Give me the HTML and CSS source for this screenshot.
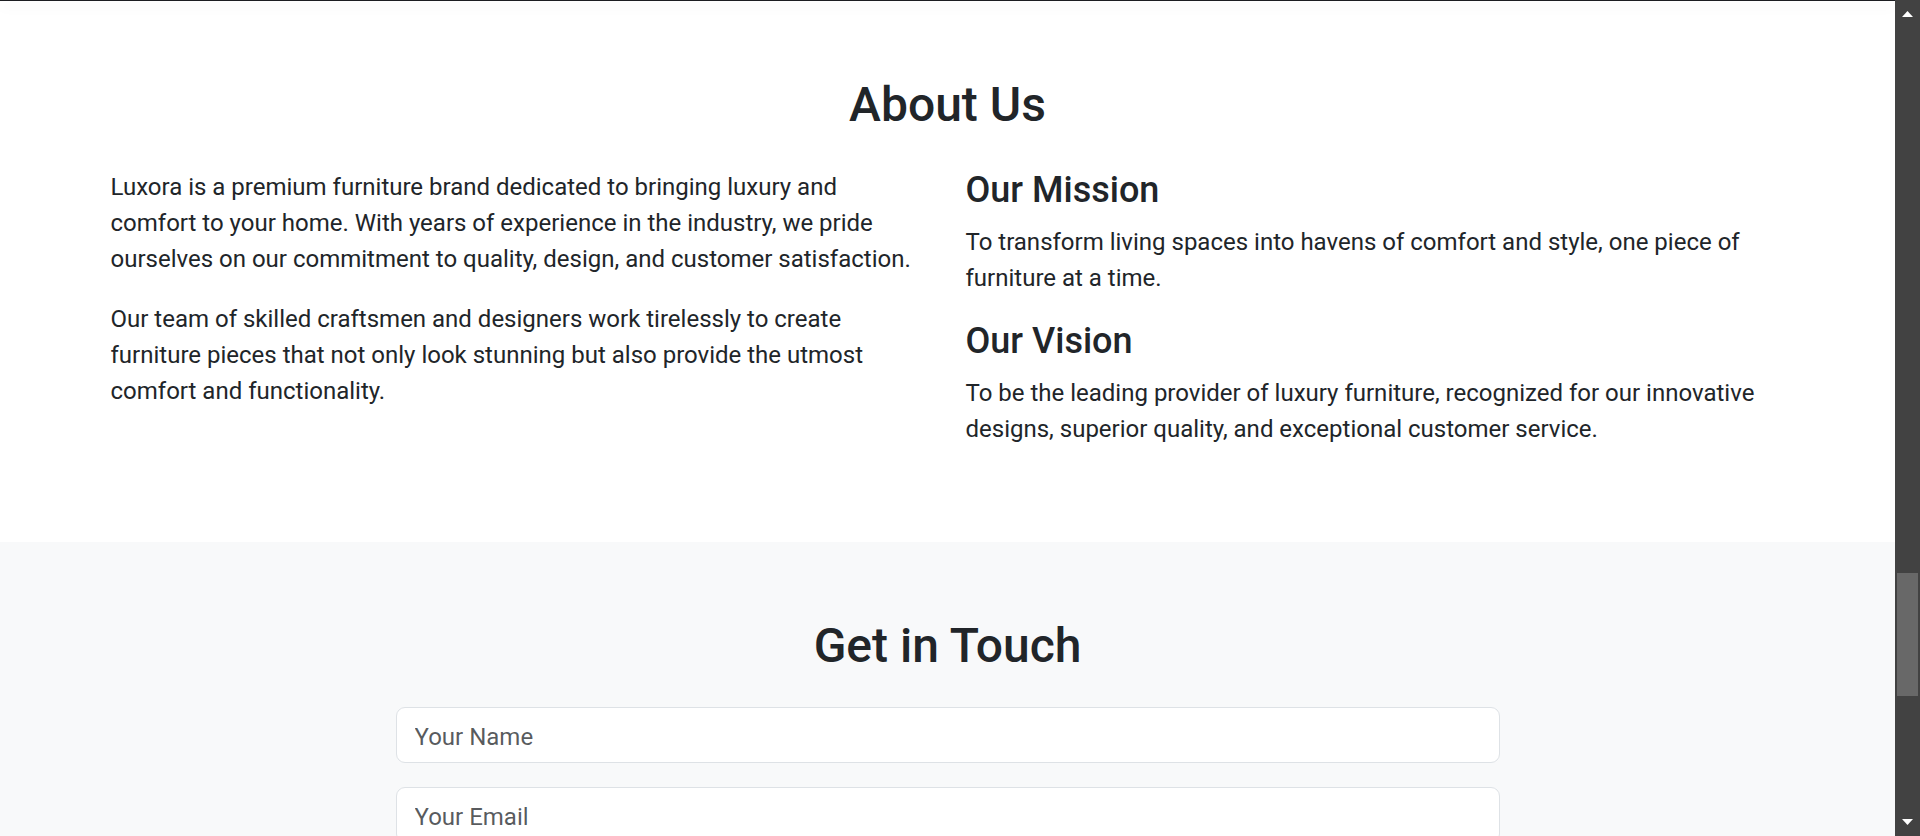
FILE: index.html
```html
<!DOCTYPE html>
<html lang="en">
<head>
<meta charset="utf-8">
<title>Luxora - About Us</title>
<link rel="stylesheet" href="styles.css">
</head>
<body>
<div class="page">
  <div class="viewport">
    <div class="navbar-edge"></div>

    <section class="about">
      <div class="container">
        <h2 class="section-title about-title">About Us</h2>
        <div class="row">
          <div class="col col-intro">
            <p>Luxora is a premium furniture brand dedicated to bringing luxury and comfort to your home. With years of experience in the industry, we pride ourselves on our commitment to quality, design, and customer satisfaction.</p>
            <p>Our team of skilled craftsmen and designers work tirelessly to create furniture pieces that not only look stunning but also provide the utmost comfort and functionality.</p>
          </div>
          <div class="col">
            <h3 class="sub-title">Our Mission</h3>
            <p>To transform living spaces into havens of comfort and style, one piece of furniture at a time.</p>
            <h3 class="sub-title">Our Vision</h3>
            <p>To be the leading provider of luxury furniture, recognized for our innovative designs, superior quality, and exceptional customer service.</p>
          </div>
        </div>
      </div>
    </section>

    <section class="contact">
      <div class="container">
        <h2 class="section-title contact-title">Get in Touch</h2>
        <form class="contact-form">
          <input class="form-control" type="text" placeholder="Your Name">
          <input class="form-control" type="email" placeholder="Your Email">
          <textarea class="form-control" rows="5" placeholder="Your Message"></textarea>
        </form>
      </div>
    </section>
  </div>

  <div class="scrollbar">
    <div class="sb-btn">
      <svg width="11" height="6" viewBox="0 0 11 6"><polygon points="5.5,0 11,6 0,6" fill="#ffffff"/></svg>
    </div>
    <div class="sb-track"><div class="sb-thumb"></div></div>
    <div class="sb-btn sb-btn-down">
      <svg width="11" height="6" viewBox="0 0 11 6"><polygon points="0,0 11,0 5.5,6" fill="#ffffff"/></svg>
    </div>
  </div>
</div>
</body>
</html>
```
FILE: styles.css
```css
* { box-sizing: border-box; }

html, body {
  margin: 0;
  padding: 0;
  height: 100%;
  overflow: hidden;
}

body {
  font-family: Roboto, "Noto Sans", "Liberation Sans", sans-serif;
  font-size: 24px;
  line-height: 1.5;
  color: #212529;
  background: #ffffff;
}

.page {
  display: flex;
  height: 836px;
}

.viewport {
  flex: 1;
  position: relative;
  overflow: hidden;
  background: #ffffff;
}

.navbar-edge {
  position: absolute;
  top: 0;
  left: 0;
  right: 0;
  height: 1px;
  background: #1c1d21;
  box-shadow: 0 6px 12px 0 rgba(0, 0, 0, 0.14);
  z-index: 10;
}

.container {
  width: 1710px;
  margin: 0 auto;
  padding: 0 18px;
}

.section-title {
  margin: 0;
  font-size: 48px;
  font-weight: 500;
  line-height: 1.2;
  text-align: center;
  color: #212529;
}

.about {
  padding: 76px 0 71px;
  background: #ffffff;
}

.about-title {
  margin-bottom: 35px;
}

.row {
  display: grid;
  grid-template-columns: 1fr 1fr;
  column-gap: 36px;
}

.col p {
  margin: 0 0 24px;
}

.col-intro p {
  max-width: 808px;
}

.sub-title {
  margin: 0 0 12px;
  font-size: 36px;
  font-weight: 500;
  line-height: 1.2;
}

.contact {
  padding: 75px 0 72px;
  background: #f8f9fa;
  min-height: 400px;
}

.contact-title {
  margin-bottom: 32px;
}

.contact-form {
  width: 1104px;
  margin: 0 auto;
  display: flex;
  flex-direction: column;
  gap: 24px;
}

.form-control {
  display: block;
  width: 100%;
  height: 56px;
  padding: 11px 18px 7px;
  font-family: inherit;
  font-size: 24px;
  line-height: 36px;
  color: #212529;
  background: #ffffff;
  border: 1px solid #dee2e6;
  border-radius: 9px;
  outline: none;
  resize: none;
}

textarea.form-control {
  height: 200px;
}

.form-control::placeholder {
  color: rgba(33, 37, 41, 0.75);
  opacity: 1;
}

.scrollbar {
  width: 25px;
  flex: none;
  background: #424242;
  display: flex;
  flex-direction: column;
}

.sb-btn {
  height: 25px;
  display: flex;
  justify-content: center;
  padding-top: 11px;
}

.sb-btn-down {
  padding-top: 8px;
}

.sb-track {
  flex: 1;
  padding-top: 548px;
}

.sb-thumb {
  width: 21px;
  height: 123px;
  margin-left: 2px;
  background: #686868;
}
```
